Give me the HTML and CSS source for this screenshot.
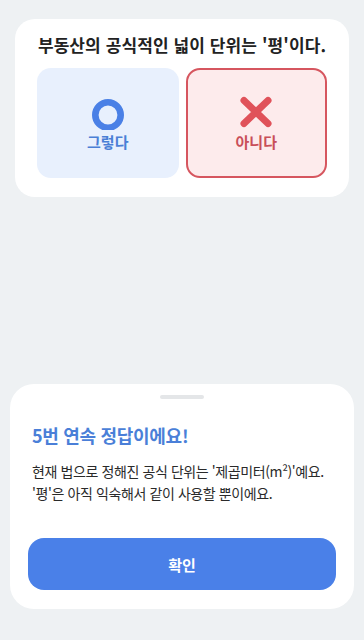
FILE: index.html
```html
<!DOCTYPE html>
<html lang="ko">
<head>
    <meta charset="UTF-8">
    <title>OX 퀴즈</title>
    <link rel="stylesheet" href="styles.css">
</head>
<body>
    <div class="quiz">
        <div class="question">부동산의 공식적인 넓이 단위는 '평'이다.</div>
        <div class="choices">
            <div class="choice choice-yes">
                <svg class="icon" viewBox="0 0 36 36" width="36" height="36">
                    <circle cx="18" cy="21" r="12.7" fill="none" stroke="#4a80e6" stroke-width="6.6"/>
                </svg>
                <span>그렇다</span>
            </div>
            <div class="choice choice-no selected">
                <svg class="icon" viewBox="0 0 36 36" width="36" height="36">
                    <path d="M6 6.5 L30 29.5 M30 6.5 L6 29.5" stroke="#e0525a" stroke-width="7" stroke-linecap="round"/>
                </svg>
                <span>아니다</span>
            </div>
        </div>
    </div>

    <div class="sheet">
        <div class="handle"></div>
        <div class="sheet-title">5번 연속 정답이에요!</div>
        <p class="sheet-text">현재 법으로 정해진 공식 단위는 '제곱미터(m²)'예요.<br>'평'은 아직 익숙해서 같이 사용할 뿐이에요.</p>
        <button class="confirm">확인</button>
    </div>
</body>
</html>
```

FILE: styles.css
```css
* {
    box-sizing: border-box;
}
body {
    margin: 0;
    height: 640px;
    display: flex;
    flex-direction: column;
    background-color: #eef1f3;
    font-family: "Noto Sans CJK KR", "Noto Sans", sans-serif;
    color: #222;
}
.quiz {
    margin: 19px 15px 0;
    padding: 14px 22px 19px;
    background: #fff;
    border-radius: 20px;
}
.question {
    font-size: 17px;
    font-weight: 700;
    line-height: 24px;
    text-align: center;
    letter-spacing: 0.1px;
}
.choices {
    margin-top: 11px;
    display: grid;
    grid-template-columns: 1fr 1fr;
    gap: 7px;
}
.choice {
    height: 110px;
    border-radius: 14px;
    display: flex;
    flex-direction: column;
    align-items: center;
    justify-content: center;
    gap: 2px;
    font-size: 15px;
    font-weight: 700;
    line-height: 20px;
}
.choice-yes {
    background: #e8f0fd;
    color: #4a7fd6;
}
.choice-no {
    background: #fdebec;
    color: #c94f59;
}
.choice.selected {
    border: 2.5px solid #d6565f;
}
.icon {
    display: block;
}
.sheet {
    margin: auto 10px 31px;
    padding: 11px 18px 19px;
    background: #fff;
    border-radius: 24px;
}
.handle {
    width: 44px;
    height: 4px;
    margin: 0 auto;
    border-radius: 2px;
    background: #e4e6e8;
}
.sheet-title {
    margin-top: 23px;
    padding: 0 4px;
    font-size: 18px;
    font-weight: 700;
    line-height: 26px;
    color: #4a7fd8;
    letter-spacing: -0.3px;
}
.sheet-text {
    margin: 12px 0 0;
    padding: 0 4px;
    font-size: 14px;
    line-height: 22px;
    color: #2a2a2a;
    letter-spacing: -0.4px;
}
.confirm {
    display: block;
    width: 100%;
    height: 52px;
    margin-top: 34px;
    border: none;
    border-radius: 16px;
    background: #4a80e8;
    color: #fff;
    font-family: inherit;
    font-size: 15px;
    font-weight: 700;
    cursor: pointer;
}
```
